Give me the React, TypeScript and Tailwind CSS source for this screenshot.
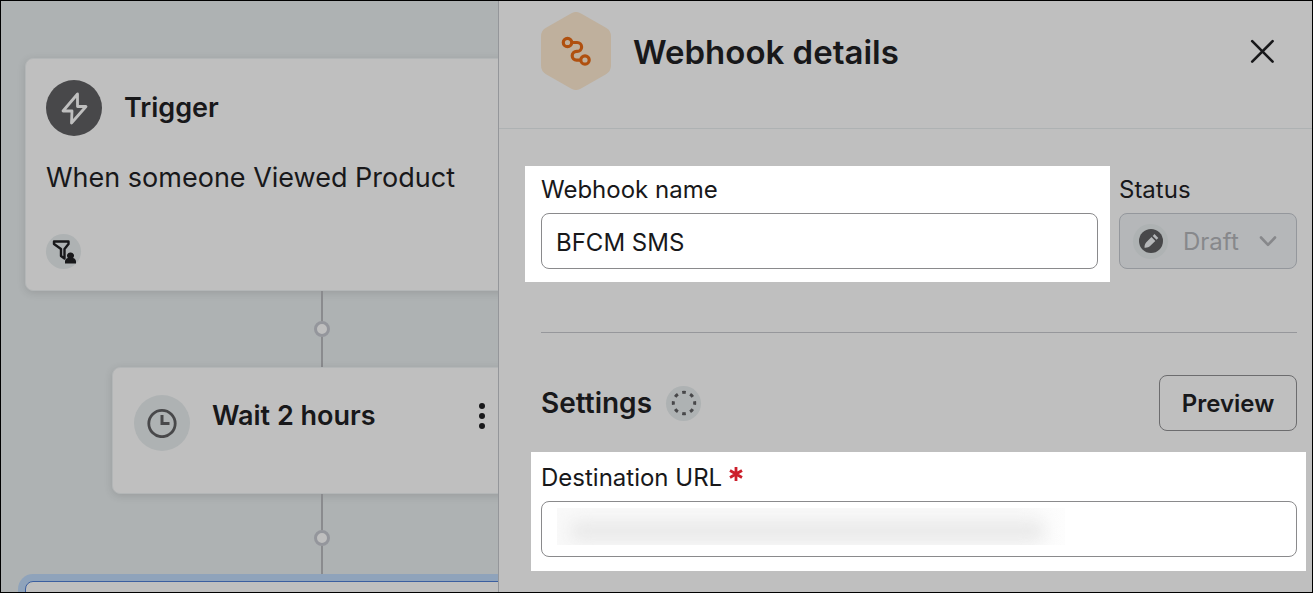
import { useState } from 'react';
import type { ReactNode } from 'react';

export default function App() {
  return (
    <div className="flex h-screen min-h-[593px] overflow-hidden border border-black bg-[#aeb2b3] font-['Inter','Liberation_Sans',sans-serif] text-[#18181a]">
      <FlowCanvas />
      <DetailsPanel />
    </div>
  );
}

function FlowCanvas() {
  return (
    <main className="w-[497px] shrink-0 overflow-hidden pt-[57px] pl-6">
      {/* The column is wider than the visible canvas: the panel cuts it off. */}
      <div className="flex w-[594px] flex-col items-center">
        <section className="w-full rounded-lg border border-[#b3b6b7] bg-[#bfbfbf] px-5 py-[21px] shadow-[0_2px_8px_rgba(0,0,0,0.12)]">
          <div className="flex items-center gap-[22px]">
            <span className="flex size-14 items-center justify-center rounded-full bg-[#48484a]">
              <BoltIcon />
            </span>
            <h2 className="text-[27px] leading-9 font-semibold">Trigger</h2>
          </div>
          <p className="mt-6 text-[27px] leading-9">When someone Viewed Product</p>
          <span className="mt-[38px] flex size-[35px] items-center justify-center rounded-full bg-[#aeb2b3]">
            <ProfileFilterIcon />
          </span>
        </section>

        <Connector className="h-[76px]" />

        <section className="flex min-h-[127px] w-[420px] items-start rounded-lg border border-[#b3b6b7] bg-[#bfbfbf] pt-[27px] pr-[37px] pl-[21px] shadow-[0_2px_8px_rgba(0,0,0,0.12)]">
          <span className="flex size-14 items-center justify-center rounded-full bg-[#aeb2b3]">
            <ClockIcon />
          </span>
          <h2 className="ml-[22px] flex-1 text-[27px] leading-[42px] font-semibold">Wait 2 hours</h2>
          <button type="button" aria-label="More actions" className="flex h-[42px] w-6 items-center justify-center">
            <svg width="8" height="28" viewBox="0 0 8 28" fill="currentColor">
              <circle cx="4" cy="4" r="3" />
              <circle cx="4" cy="14" r="3" />
              <circle cx="4" cy="24" r="3" />
            </svg>
          </button>
        </section>

        <Connector className="h-[87px]" />

        <section className="h-40 w-full rounded-lg border border-[#3c5f9f] bg-[#bfbfbf] ring-[7px] ring-[#8fa3bb]" />
      </div>
    </main>
  );
}

function Connector({ className }: { className: string }) {
  return (
    <div className={`flex flex-col items-center ${className}`}>
      <span className="w-[2px] flex-1 bg-[#8a8b8e]" />
      <span className="size-4 rounded-full border-[3px] border-[#94969c] bg-[#bfbfbf]" />
      <span className="w-[2px] flex-1 bg-[#8a8b8e]" />
    </div>
  );
}

function DetailsPanel() {
  const [name, setName] = useState('BFCM SMS');
  const [url, setUrl] = useState('');

  return (
    <aside className="min-w-0 flex-1 border-l border-[#94969a] bg-[#bfbfbf]">
      <header className="flex items-center border-b border-[#aeb2b3] pt-[11px] pr-7 pb-[38px] pl-[42px]">
        <WebhookBadge />
        <h1 className="ml-[22px] flex-1 pt-[2px] text-[33px] leading-[44px] font-semibold">Webhook details</h1>
        <button type="button" aria-label="Close" className="flex size-11 items-center justify-center">
          <svg width="24" height="24" viewBox="0 0 24 24" fill="none" stroke="currentColor" strokeWidth="2.6" strokeLinecap="round">
            <path d="M2.2 2.2l20.4 20.4M22.600 2.200L2.200 22.600" />
          </svg>
        </button>
      </header>

      <div className="flex items-start gap-[9px] pt-[37px] pr-[15px] pl-[26px]">
        <Highlight className="flex-1 pt-2 pr-3 pb-[13px] pl-4">
          <label htmlFor="webhook-name" className="block text-[24px] leading-8">
            Webhook name
          </label>
          <input
            id="webhook-name"
            type="text"
            value={name}
            onChange={(e) => setName(e.target.value)}
            className="mt-[7px] block h-14 w-full rounded-lg border border-[#8a8a8c] bg-white px-[14px] pt-[2px] text-[24px]"
          />
        </Highlight>
        <div className="w-[178px] pt-2">
          <span id="status-label" className="block text-[24px] leading-8">
            Status
          </span>
          <button
            type="button"
            disabled
            aria-labelledby="status-label status-value"
            className="mt-[7px] flex h-14 w-full items-center rounded-lg border border-[#94979c] bg-[#b5b7b9] pr-[18px] pl-[13px] text-[24px] text-[#87888b]"
          >
            <span className="flex size-[35px] items-center justify-center rounded-full bg-[#aeb2b3]">
              <DraftIcon />
            </span>
            <span id="status-value" className="ml-[15px] flex-1 pt-[2px] text-left">
              Draft
            </span>
            <svg width="20" height="12" viewBox="0 0 20 12" fill="none" stroke="currentColor" strokeWidth="2.6" strokeLinecap="round" strokeLinejoin="round">
              <path d="M3 2.500l7 7.400 7-7.400" />
            </svg>
          </button>
        </div>
      </div>

      <hr className="mt-[50px] mr-[15px] ml-[42px] border-[#96979b]" />

      <div className="mt-[42px] flex items-center pr-[15px] pl-[42px]">
        <h2 className="text-[28px] leading-9 font-semibold">Settings</h2>
        <span className="ml-[14px] flex size-[35px] items-center justify-center rounded-full bg-[#aeb2b3]">
          <DottedCircleIcon />
        </span>
        <button type="button" className="ml-auto h-14 w-[138px] rounded-lg border border-[#6c6c6e] pt-[2px] text-[24px] font-semibold">
          Preview
        </button>
      </div>

      <Highlight className="mt-[21px] mr-[6px] ml-8 pt-[10px] pr-[9px] pb-[14px] pl-[10px]">
        <label htmlFor="destination-url" className="flex items-center gap-[7px] text-[24px] leading-8">
          Destination URL
          <svg width="14" height="14" viewBox="0 0 14 14" fill="none" stroke="#cc1f2b" strokeWidth="2.8" className="mb-2">
            <path d="M7 0v14M1 3.500l12 7M13 3.500l-12 7" />
          </svg>
        </label>
        <div className="relative mt-[7px]">
          <input
            id="destination-url"
            type="url"
            required
            value={url}
            onChange={(e) => setUrl(e.target.value)}
            className="block h-14 w-full rounded-lg border border-[#8a8a8c] bg-white px-[14px] pt-[2px] text-[24px]"
          />
          <div className="pointer-events-none absolute top-[7px] left-4 h-[37px] w-[508px] overflow-hidden bg-linear-to-r from-[#f9f9f9] from-90% to-[#fdfdfd]">
            <div className="mt-[13px] mr-5 ml-3 h-5 rounded-full bg-[#e9e9e9] blur-[8px]" />
          </div>
        </div>
      </Highlight>
    </aside>
  );
}

function Highlight({ className, children }: { className: string; children: ReactNode }) {
  return <div className={`bg-white ${className}`}>{children}</div>;
}

function WebhookBadge() {
  return (
    <svg width="70" height="78" viewBox="0 0 70 78" fill="none">
      <path
        d="M30 1.4a10 10 0 0 1 10 0l25 14.4a10 10 0 0 1 5 8.7v29a10 10 0 0 1-5 8.7L40 76.6a10 10 0 0 1-10 0L5 62.2a10 10 0 0 1-5-8.7v-29a10 10 0 0 1 5-8.7z"
        fill="#bfb09d"
      />
      <g stroke="#b0500f" strokeWidth="3.200">
        <circle cx="26.500" cy="30.500" r="4.200" />
        <circle cx="44" cy="48" r="4.200" />
        <path d="M30.700 30.500h5.500a4.400 4.400 0 0 1 0 8.800h-.6a4.400 4.400 0 0 0 0 8.800h4.200" />
      </g>
    </svg>
  );
}

function BoltIcon() {
  return (
    <svg width="28" height="34" viewBox="0 0 28 34" fill="none" stroke="#bfbfbf" strokeWidth="2.800" strokeLinejoin="round">
      <path d="M17.500 3L3 20h9l-.5 12L26 15.500h-8.500z" />
    </svg>
  );
}

function ClockIcon() {
  return (
    <svg width="30" height="30" viewBox="0 0 30 30" fill="none" stroke="#48484a" strokeWidth="2.800">
      <circle cx="15" cy="15.500" r="13.200" />
      <path d="M15 7v8.500h7.500" strokeWidth="3" />
    </svg>
  );
}

function ProfileFilterIcon() {
  return (
    <svg width="24" height="24" viewBox="0 0 24 24" fill="none">
      <path d="M2 1.500h14.500v2.500l-4 5v9.500l-3.500-2.500V9L2 4z" stroke="#18181a" strokeWidth="2.400" strokeLinejoin="round" />
      <path d="M18.500 12.500a3.200 3.200 0 0 1 2.600 5.400c2.100.6 2.900 1.900 2.900 3.600v2H13v-2c0-1.700.8-3 2.900-3.600a3.200 3.200 0 0 1 2.600-5.400z" fill="#18181a" />
    </svg>
  );
}

function DraftIcon() {
  return (
    <svg width="24" height="24" viewBox="0 0 24 24" fill="none">
      <circle cx="12" cy="12" r="12" fill="#48484a" />
      <path d="M5.500 18.700c0-2.200.4-4 1.800-5.400l5.200-5.200 3.800 3.800-5.200 5.200c-1.400 1.400-3.400 1.800-5.600 1.600z" fill="#b5b7b9" />
      <path d="M13.700 6.900l1.800-1.800 3.800 3.800-1.800 1.800z" fill="#b5b7b9" />
    </svg>
  );
}

function DottedCircleIcon() {
  return (
    <svg width="26" height="26" viewBox="0 0 26 26" fill="none" stroke="#48484a" strokeWidth="3">
      <circle cx="13" cy="13" r="10.700" pathLength="80" strokeDasharray="4.400 5.600" strokeDashoffset="2.200" />
    </svg>
  );
}
